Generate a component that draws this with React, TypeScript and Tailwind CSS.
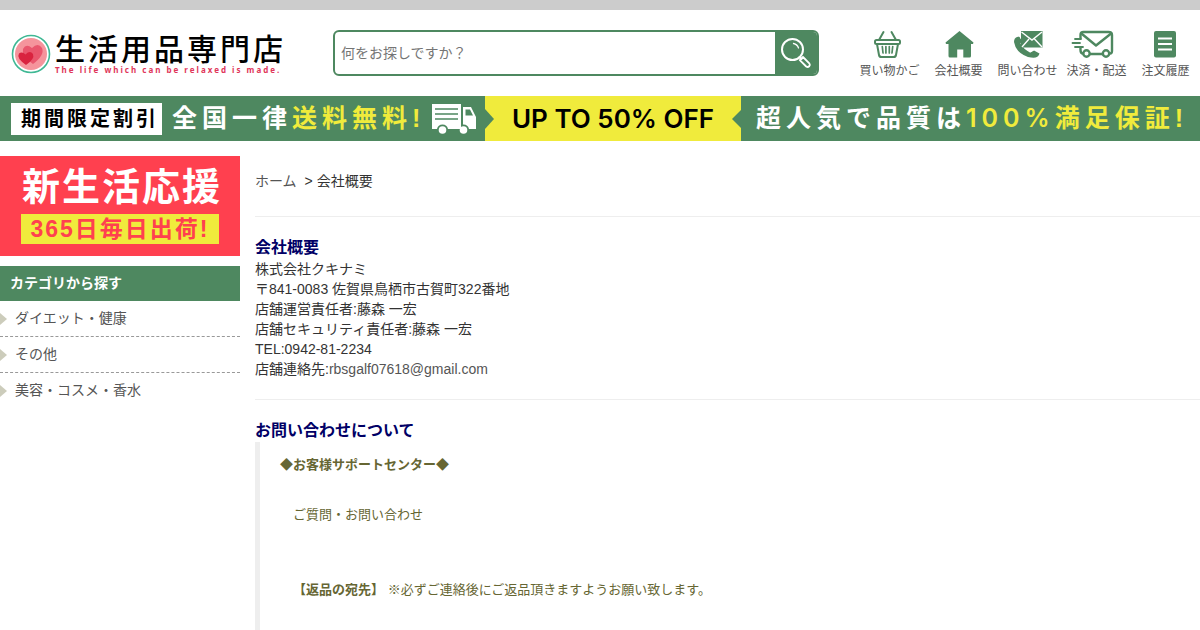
import type { ReactNode } from 'react';

interface NavItem {
  label: string;
  icon: ReactNode;
}

const BasketIcon = () => (
  <svg width="32" height="28" viewBox="0 0 32 28" fill="none" stroke="#4e8860" strokeWidth="2" strokeLinecap="round" strokeLinejoin="round">
    <path d="M9.5 2 L5 10 M17.5 2 L22 10" />
    <rect x="1" y="10" width="25" height="4" rx="1.5" />
    <path d="M3 14 L5 25 Q5.3 27 7.5 27 H19.5 Q21.7 27 22 25 L24 14" />
    <path d="M8.3 16.5 L9 23 M11.9 16.5 V23 M15.3 16.5 V23 M18.7 16.5 L18 23" strokeWidth="1.7" />
  </svg>
);

const HomeIcon = () => (
  <svg width="30" height="28" viewBox="0 0 30 28" fill="#4e8860">
    <path d="M15.5 1 L29.5 12.5 L29 14 H27 V26 Q27 27.5 25.5 27.5 H19.3 V19.5 H13.2 V27.5 H6 Q4.500 27.500 4.500 26 V14 H2 L1.500 12.500 Z" />
  </svg>
);

const ContactIcon = () => (
  <svg width="30" height="28" viewBox="0 0 30 28">
    <path d="M4 7 Q1 8 1 12 Q3 23 15 27 Q20 28 22.5 27.5 Q25.5 27 26.5 23.5 L21 20.5 L17.5 22.5 Q10.5 19.5 7.5 13.5 L9 11 L6.5 6.5 Z" fill="#4e8860" />
    <path d="M6.500 5.500 L10.500 11.500 L9 14 L17 21.500 L21 19" fill="none" stroke="white" strokeWidth="1.500" />
    <rect x="8" y="1" width="21.5" height="16.5" fill="#4e8860" />
    <path d="M8.5 2 L19 10 L29 2 M9 17 L16 9 M29 17 L21.5 9" stroke="white" strokeWidth="1.4" fill="none" />
  </svg>
);

const DeliveryIcon = () => (
  <svg width="52" height="28" viewBox="0 0 52 28" fill="none" stroke="#4e8860" strokeWidth="2.4" strokeLinecap="round" strokeLinejoin="round">
    <path d="M9.5 8 V5 Q9.5 2 12.5 2 H37.500 Q41 2 41 5 V21 Q41 23.500 39 23.500 M12 23.500 Q9.500 23.500 9.500 20 V18 M19 24 H32" />
    <path d="M11 4 L25 15.5 L39.500 4" />
    <path d="M4 9 H10 M1.5 13 H9 M4 17 H12" strokeWidth="1.8" />
    <circle cx="15.5" cy="23.5" r="3.2" />
    <circle cx="35" cy="23.5" r="3.2" />
  </svg>
);

const HistoryIcon = () => (
  <svg width="24" height="28" viewBox="0 0 24 28">
    <rect y="1" width="22" height="26.5" rx="2" fill="#4e8860" />
    <path d="M4 8.5 H18 M4 14 H18 M4 19.5 H18" stroke="white" strokeWidth="1.8" />
  </svg>
);

const TruckIcon = () => (
  <svg className="shrink-0" width="45" height="30" viewBox="0 0 45 30" fill="white">
    <path d="M0 0 H29 V25 H16 Q15 20.5 10.5 20.5 Q6 20.5 5 25 H0 Z" />
    <path d="M3 5 H26 M3 10 H26 M3 15 H26" stroke="#4e8860" strokeWidth="1.5" />
    <path fillRule="evenodd" d="M31 3 H39 L44 13 V25 H37 Q36 20.5 31.5 20.5 H31 Z M33.5 5.5 V11.5 H41 L38 5.5 Z" />
    <circle cx="10.5" cy="26" r="3.8" />
    <circle cx="31.5" cy="26" r="3.8" />
  </svg>
);

const LogoMark = () => (
  <svg className="shrink-0" width="40" height="40" viewBox="0 0 40 40">
    <circle cx="20" cy="20" r="18.5" fill="white" stroke="#3fb894" strokeWidth="1.6" />
    <circle cx="20" cy="20" r="16" fill="#f5949c" />
    <path d="M22 30 Q10 22 12 15 Q15 9 21 14 Q27 8 31 14 Q34 21 22 30 Z" fill="#e9566d" />
    <path d="M15 31 Q5 24 8 19.5 Q11 17 14.5 20.5 Q19 16 22 20 Q24 25 15 31 Z" fill="#d9233f" />
  </svg>
);

const SearchIcon = () => (
  <svg width="32" height="32" viewBox="0 0 32 32" fill="none" stroke="white" strokeLinecap="round">
    <circle cx="12.5" cy="12.5" r="10.5" strokeWidth="2" />
    <path d="M13.5 6.5 Q17.5 7.5 18.5 11" strokeWidth="1.3" />
    <path d="M19.5 20 L21.5 22" strokeWidth="2" />
    <path d="M19.8 23.2 L23 20 L29.3 26.3 Q30.5 28 29.2 29.3 Q27.8 30.5 26.2 29.5 Z" strokeWidth="1.8" strokeLinejoin="round" />
  </svg>
);

const navItems: NavItem[] = [
  { label: '買い物かご', icon: <BasketIcon /> },
  { label: '会社概要', icon: <HomeIcon /> },
  { label: '問い合わせ', icon: <ContactIcon /> },
  { label: '決済・配送', icon: <DeliveryIcon /> },
  { label: '注文履歴', icon: <HistoryIcon /> },
];

const categories = ['ダイエット・健康', 'その他', '美容・コスメ・香水'];

function Header() {
  return (
    <header className="flex items-start border-t-10 border-[#ccc] pt-5 pb-3">
      <a href="#" className="flex w-[333px] shrink-0 items-start gap-1 pt-1 pl-[11px]">
        <LogoMark />
        <span className="whitespace-nowrap">
          <span className="block text-[30px] leading-8 font-medium tracking-[3px] text-black">生活用品専門店</span>
          <span className="block font-['Noto_Sans'] text-[8px] leading-2 font-bold tracking-[2px] text-[#e0365a]">
            The life which can be relaxed is made.
          </span>
        </span>
      </a>

      <form className="flex h-[46px] flex-1 overflow-hidden rounded-md border-2 border-[#4e8860]" onSubmit={(e) => e.preventDefault()}>
        <input
          type="text"
          aria-label="商品検索"
          placeholder="何をお探しですか？"
          className="min-w-0 flex-1 px-1.5 text-sm outline-none placeholder:text-[#757575]"
        />
        <button type="submit" aria-label="検索" className="flex w-[42px] items-center justify-center bg-[#4e8860]">
          <SearchIcon />
        </button>
      </form>

      <nav className="ml-9 grid w-[345px] shrink-0 grid-cols-5">
        {navItems.map((item) => (
          <a key={item.label} href="#" className="flex flex-col items-center text-xs leading-[26px] whitespace-nowrap text-[#555]">
            {item.icon}
            {item.label}
          </a>
        ))}
      </nav>
    </header>
  );
}

function CampaignBanner() {
  return (
    <section className="grid h-[45px] grid-cols-[485fr_256fr_459fr] overflow-hidden bg-[#4e8860] text-[25px] leading-none font-bold tracking-[5px] whitespace-nowrap text-white">
      <div className="flex items-center pl-[11px]">
        <span className="mr-2.5 flex h-8 w-[151px] items-center bg-white pl-2.5 text-xl tracking-[3px] text-black">期間限定割引</span>
        <span>全国一律</span>
        <span className="w-[140px] text-[#f0eb3c]">送料無料!</span>
        <TruckIcon />
      </div>

      <div className="flex items-center justify-between bg-[#f0eb3c] font-[Inter,sans-serif] text-[26px] font-semibold tracking-normal text-black">
        <svg width="9" height="20" viewBox="0 0 9 20" fill="#4e8860"><path d="M0 0 L9 10 L0 20 Z" /></svg>
        <span>UP TO 50% OFF</span>
        <svg width="9" height="18" viewBox="0 0 9 18" fill="#4e8860"><path d="M9 0 L0 9 L9 18 Z" /></svg>
      </div>

      <div className="flex items-center pl-[15px]">
        <span>超人気で品質は</span>
        <span className="text-[#f0eb3c]">
          <span className="font-[Inter,sans-serif] font-semibold">100%</span>満足保証!
        </span>
      </div>
    </section>
  );
}

function Sidebar() {
  return (
    <aside className="w-60 shrink-0">
      <a href="#" className="flex h-[100px] flex-col items-center gap-2 bg-[#ff404f] pt-3 font-bold whitespace-nowrap">
        <span className="pl-1 text-[38px] leading-[38px] tracking-[2px] text-white">新生活応援</span>
        <span className="flex h-[30px] w-[198px] items-center justify-center bg-[#f0eb3c] text-[23px] leading-none tracking-[2px] text-[#ff404f]">
          365日毎日出荷!
        </span>
      </a>

      <h2 className="mt-2.5 bg-[#4e8860] pl-2.5 text-sm leading-[35px] font-bold text-white">カテゴリから探す</h2>
      <ul>
        {categories.map((category) => (
          <li key={category} className="border-b border-dashed border-[#999] last:border-b-0">
            <a href="#" className="flex items-center gap-2 text-sm leading-[35px] text-[#555]">
              <svg width="7" height="12" viewBox="0 0 7 12" fill="#ccccbb"><path d="M0 0 L7 6 L0 12 Z" /></svg>
              {category}
            </a>
          </li>
        ))}
      </ul>
    </aside>
  );
}

function CompanyInfo() {
  return (
    <main className="min-w-0 flex-1 text-sm leading-5 text-[#333]">
      <nav className="pt-[15px] pb-[25px]">
        <a href="#" className="mr-2 text-[#555]">ホーム</a>
        <span>&gt; 会社概要</span>
      </nav>

      <section className="border-t border-[#eee] py-5">
        <h1 className="text-base leading-[22px] font-bold text-[#006]">会社概要</h1>
        <p>株式会社クキナミ</p>
        <p>〒841-0083 佐賀県鳥栖市古賀町322番地</p>
        <p>店舗運営責任者:藤森 一宏</p>
        <p>店舗セキュリティ責任者:藤森 一宏</p>
        <p>TEL:0942-81-2234</p>
        <p>
          店舗連絡先:<a href="mailto:rbsgalf07618@gmail.com" className="text-[#555]">rbsgalf07618@gmail.com</a>
        </p>
      </section>

      <section className="border-t border-[#eee] pt-5">
        <h2 className="text-base leading-[22px] font-bold text-[#006]">お問い合わせについて</h2>
        <blockquote className="border-l-5 border-[#eee] px-5 pt-2.5 pb-7 text-[13px] leading-[25px] text-[#663]">
          <p className="font-bold">◆お客様サポートセンター◆</p>
          <p className="mt-[25px] pl-[13px]">ご質問・お問い合わせ</p>
          <p className="mt-[50px] pl-[13px]">
            <strong>【返品の宛先】</strong> ※必ずご連絡後にご返品頂きますようお願い致します。
          </p>
        </blockquote>
      </section>
    </main>
  );
}

export default function App() {
  return (
    <div className="min-h-screen bg-white font-['Liberation_Sans','Noto_Sans_CJK_JP',sans-serif]">
      <Header />
      <CampaignBanner />
      <div className="mt-[15px] flex gap-[15px]">
        <Sidebar />
        <CompanyInfo />
      </div>
    </div>
  );
}
